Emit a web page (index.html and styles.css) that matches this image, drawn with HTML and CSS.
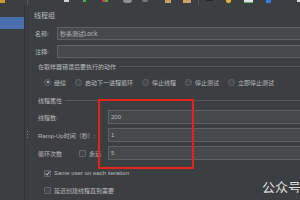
FILE: index.html
```html
<!DOCTYPE html>
<html>
<head>
<meta charset="utf-8">
<link rel="stylesheet" href="styles.css">
</head>
<body>
<div class="toolbar">
  <span class="ti t1"></span>
  <span class="ti sep t2"></span>
  <span class="ti t3"></span>
  <span class="ti t4"></span>
  <span class="ti t5a"></span><span class="ti t5b"></span>
  <span class="ti t6"></span>
  <span class="ti t7"></span>
  <span class="ti t8"></span>
  <span class="ti t9"></span>
  <span class="ti sep t10"></span>
  <span class="ti t11"></span>
  <span class="ti t12"></span>
  <span class="ti t13"></span>
  <span class="ti t14"></span>
  <span class="ti t15"></span>
</div>
<div class="main">
  <div class="tree"><div class="tree-sel"></div></div>
  <div class="splitter"><div class="grip"><i></i><i></i><i></i></div></div>
  <div class="content">
    <div class="title">线程组</div>
    <div class="row row-name"><span class="lbl">名称:</span><div class="input">秒杀测试Lock</div></div>
    <div class="row row-comment"><span class="lbl">注释:</span><div class="input"></div></div>
    <div class="group-head g1"><span>在取样器错误后要执行的动作</span><i class="gline"></i></div>
    <div class="radios">
      <span class="radio on"><i class="rc"></i>继续</span>
      <span class="radio"><i class="rc"></i>启动下一进程循环</span>
      <span class="radio"><i class="rc"></i>停止线程</span>
      <span class="radio"><i class="rc"></i>停止测试</span>
      <span class="radio"><i class="rc"></i>立即停止测试</span>
    </div>
    <div class="group-head g2"><span>线程属性</span><i class="gline"></i></div>
    <div class="prow p1"><span class="plbl">线程数:</span><div class="input pin">200</div></div>
    <div class="prow"><span class="plbl">Ramp-Up时间（秒）:</span><div class="input pin">1</div></div>
    <div class="prow"><span class="plbl loop">循环次数</span><span class="cb"></span><span class="forever">永远</span><div class="input pin">5</div></div>
    <div class="crow c1"><span class="cb"><svg viewBox="0 0 7 7" width="7" height="7"><path d="M1.4 3.6 L2.9 5.1 L5.6 1.6" fill="none" stroke="#c8c8c8" stroke-width="1"/></svg></span>Same user on each iteration</div>
    <div class="crow c2"><span class="cb"></span>延迟创建线程直到需要</div>
  </div>
</div>
<div class="highlight"></div>
<div class="watermark">公众号</div>
</body>
</html>
```

FILE: styles.css
```css
html, body {
  margin: 0;
  padding: 0;
}
body {
  width: 300px;
  height: 200px;
  overflow: hidden;
  background: #3c3f41;
  color: #bbbbbb;
  font-family: "Liberation Sans", "Noto Sans CJK SC", sans-serif;
  font-size: 6px;
  position: relative;
}
.toolbar {
  height: 5px;
  display: flex;
  align-items: flex-start;
  background: #3c3f41;
  overflow: hidden;
}
.ti {
  display: block;
  height: 3px;
  flex: none;
}
.sep { width: 1px; height: 5px; background: #545658; }
.t1 { width: 5px; background: #c99a3c; }
.t2 { margin-left: 22px; }
.t3 { margin-left: 36px; width: 5px; height: 2px; background: #cfcfcf; }
.t4 { margin-left: 14px; width: 3px; height: 2px; background: #4caf50; }
.t5a { margin-left: 16px; width: 3px; height: 2px; background: #d04040; }
.t5b { width: 3px; height: 2px; background: #4caf50; }
.t6 { margin-left: 15px; width: 9px; height: 3px; background: #8d8d8d; border-radius: 0 0 4px 4px; }
.t7 { margin-left: 10px; width: 6px; height: 2px; background: #7a7a7a; border-radius: 0 0 3px 3px; }
.t8 { margin-left: 17px; width: 6px; background: #c8a062; }
.t9 { margin-left: 12px; width: 8px; background: #c8a062; }
.t10 { margin-left: 7px; }
.t11 { margin-left: 7px; width: 7px; height: 1px; background: #262626; }
.t12 { margin-left: 13px; width: 5px; background: #e0b43a; border-radius: 0 0 2px 2px; }
.t13 { margin-left: 13px; width: 9px; background: #dfe4e8; border-bottom: 1px solid #5bb55e; height: 2px; }
.t14 { margin-left: 13px; width: 5px; background: #3b78d8; }
.t15 { margin-left: 26px; width: 3px; height: 2px; background: #d8d8d8; }

.main {
  display: flex;
  height: 195px;
}
.tree {
  width: 25px;
  flex: none;
  padding-top: 12px;
  box-sizing: border-box;
  border-right: 1px solid #2f3133;
}
.tree-sel {
  height: 12px;
  background: #4b6eaf;
}
.splitter {
  width: 4px;
  flex: none;
  display: flex;
  justify-content: center;
}
.grip {
  margin-top: 126px;
  display: flex;
  flex-direction: column;
  gap: 2px;
}
.grip i {
  display: block;
  width: 1px;
  height: 1px;
  background: #8a8a8a;
}
.content {
  flex: 1;
  display: flex;
  flex-direction: column;
  min-width: 0;
}
.title {
  height: 21px;
  line-height: 21px;
  padding-left: 5px;
  font-size: 7px;
  font-family: "Noto Sans CJK SC", sans-serif;
}
.row {
  display: flex;
  align-items: center;
  height: 13px;
  padding-left: 6px;
}
.row-name { margin-top: 1px; }
.row-comment { margin-top: 5px; }
.lbl {
  width: 22px;
  flex: none;
  font-family: "Noto Sans CJK SC", sans-serif;
}
.input {
  flex: 1;
  min-width: 0;
  align-self: stretch;
  box-sizing: border-box;
  background: #45494a;
  border: 1px solid #5e6265;
  border-right: none;
  padding-left: 2px;
  display: flex;
  align-items: center;
  font-family: "Noto Sans CJK SC", sans-serif;
  color: #bbbbbb;
}
.group-head {
  display: flex;
  align-items: center;
  height: 12px;
  padding-left: 9px;
  font-family: "Noto Sans CJK SC", sans-serif;
}
.g1 { margin-top: 2px; }
.g2 { margin-top: 5px; }
.gline {
  flex: 1;
  height: 1px;
  background: #55585a;
  margin-left: 3px;
}
.radios {
  margin-top: 3px;
  height: 14px;
  display: flex;
  align-items: center;
  padding-left: 15px;
  font-family: "Noto Sans CJK SC", sans-serif;
  white-space: nowrap;
  overflow: hidden;
}
.radio {
  display: flex;
  align-items: center;
  gap: 3px;
  margin-right: 9px;
  flex: none;
}
.rc {
  width: 7px;
  height: 7px;
  box-sizing: border-box;
  border: 1px solid #626568;
  border-radius: 50%;
  background: #43474a;
  display: flex;
  align-items: center;
  justify-content: center;
}
.radio.on .rc::after {
  content: "";
  width: 2px;
  height: 2px;
  border-radius: 50%;
  background: #c8c8c8;
}
.prow {
  display: flex;
  align-items: center;
  height: 14px;
  margin-top: 4px;
  padding-left: 9px;
  font-family: "Liberation Sans", "Noto Sans CJK SC", sans-serif;
  white-space: nowrap;
}
.plbl {
  width: 70px;
  flex: none;
}
.plbl.loop { width: 41px; }
.forever {
  margin-left: 3px;
  width: 19px;
  flex: none;
}
.cb {
  width: 7px;
  height: 7px;
  flex: none;
  box-sizing: border-box;
  border: 1px solid #626568;
  border-radius: 1px;
  background: #43474a;
  position: relative;
}
.cb svg {
  position: absolute;
  left: -1px;
  top: -1px;
}
.pin {
  font-family: "Liberation Sans", sans-serif;
}
.crow {
  display: flex;
  align-items: center;
  gap: 3px;
  height: 12px;
  padding-left: 15px;
  font-family: "Liberation Sans", "Noto Sans CJK SC", sans-serif;
  white-space: nowrap;
}
.c1 { margin-top: 7px; }
.c2 { margin-top: 5px; }
.highlight {
  position: absolute;
  left: 98px;
  top: 99px;
  width: 96px;
  height: 70px;
  box-sizing: border-box;
  border: 2px solid #e3231c;
}
.watermark {
  position: absolute;
  left: 262px;
  top: 180px;
  width: 38px;
  overflow: hidden;
  font-family: "Noto Sans CJK SC", sans-serif;
  font-size: 13px;
  line-height: 13px;
  color: #dedede;
  white-space: nowrap;
}
```
